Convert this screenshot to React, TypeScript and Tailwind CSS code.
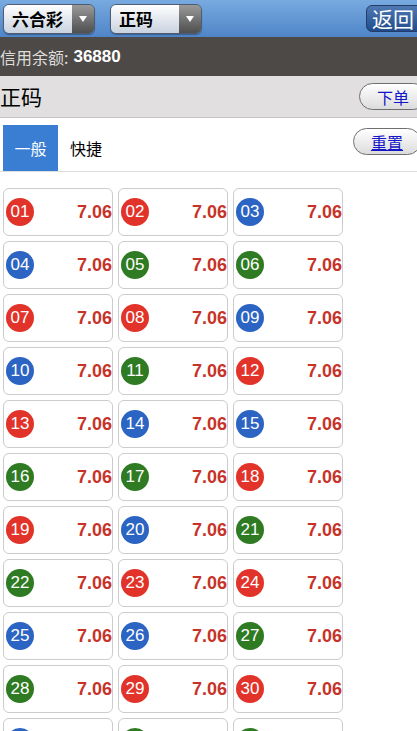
import React from "react";

const RED = [1, 2, 7, 8, 12, 13, 18, 19, 23, 24, 29, 30, 34, 35, 40, 45, 46];
const BLUE = [3, 4, 9, 10, 14, 15, 20, 25, 26, 31, 36, 37, 41, 42, 47, 48];

const ballColor = (n: number) => {
  if (RED.includes(n)) return "bg-[#e2332a]";
  if (BLUE.includes(n)) return "bg-[#2b64c3]";
  return "bg-[#2f7b23]";
};

const Select = ({ label }: { label: string }) => (
  <div className="flex h-[30px] w-[92px] overflow-hidden rounded-[6px] border border-[#4f5d72] shadow-[0_1px_1px_rgba(0,0,0,0.3)]">
    <div className="flex flex-1 items-center bg-gradient-to-b from-white to-[#c9d2df] pl-[8px] text-[17px] font-bold text-black">
      {label}
    </div>
    <div className="flex w-[22px] items-center justify-center bg-gradient-to-b from-[#9a9a9a] to-[#4f4f4f]">
      <span className="block h-0 w-0 border-x-[4px] border-t-[6px] border-x-transparent border-t-white" />
    </div>
  </div>
);

const PillButton = ({ label, underline }: { label: string; underline?: boolean }) => (
  <div
    className={`flex h-[27px] items-center rounded-full border border-[#6f6f6f] bg-gradient-to-b from-white to-[#dcdcdc] pl-[17px] pr-[17px] text-[16px] text-[#1515c8] ${
      underline ? "underline" : ""
    }`}
  >
    {label}
  </div>
);

export default function App() {
  // only the rows that fit on screen
  const nums = Array.from({ length: 33 }, (_, i) => i + 1);

  return (
    <div className="h-[731px] w-[417px] overflow-hidden bg-white font-['Noto_Sans_CJK_SC',sans-serif]">
      {/* top bar */}
      <div className="flex h-[37px] items-center bg-gradient-to-b from-[#78aae0] to-[#4f85c8] pl-[3px]">
        <Select label="六合彩" />
        <div className="ml-[15px]">
          <Select label="正码" />
        </div>
        <div className="ml-auto mr-[-8px] flex h-[27px] items-center rounded-[6px] border border-[#243c66] bg-gradient-to-b from-[#4f79b3] to-[#1f4c8c] pl-[5px] pr-[10px] text-[21px] text-white">
          返回
        </div>
      </div>

      {/* credit */}
      <div className="flex h-[39px] items-center bg-[#4d4947] text-[16px] text-[#dddddd]">
        信用余额:
        <span className="ml-[5px] font-['Liberation_Sans',sans-serif] text-[17px] font-bold text-white">36880</span>
      </div>

      {/* title */}
      <div className="flex h-[42px] items-center border-b border-[#c4c4c4] bg-[#e1dfdf]">
        <span className="text-[21px] text-black">正码</span>
        <div className="ml-auto mr-[-10px]">
          <PillButton label="下单" />
        </div>
      </div>

      {/* tabs */}
      <div className="flex h-[54px] items-end border-b border-[#dddddd] pl-[3px]">
        <div className="flex h-[46px] w-[55px] items-center justify-center bg-[#3a7ed3] text-[16px] text-white">
          一般
        </div>
        <div className="flex h-[46px] items-center pl-[12px] text-[16px] text-black">快捷</div>
        <div className="mb-[16px] ml-auto mr-[-4px]">
          <PillButton label="重置" underline />
        </div>
      </div>

      {/* numbers */}
      <div className="grid grid-cols-[110px_110px_110px] gap-x-[5px] gap-y-[5px] pl-[3px] pt-[16px]">
        {nums.map((n) => (
          <div
            key={n}
            className="flex h-[48px] items-center rounded-[6px] border border-[#cccccc] bg-white pl-[2px] pr-0 font-['Liberation_Sans',sans-serif]"
          >
            <div
              className={`flex h-[28px] w-[28px] items-center justify-center rounded-full text-[17px] text-white ${ballColor(n)}`}
            >
              {String(n).padStart(2, "0")}
            </div>
            <div className="ml-auto text-[18px] font-bold text-[#c83329]">7.06</div>
          </div>
        ))}
      </div>
    </div>
  );
}
